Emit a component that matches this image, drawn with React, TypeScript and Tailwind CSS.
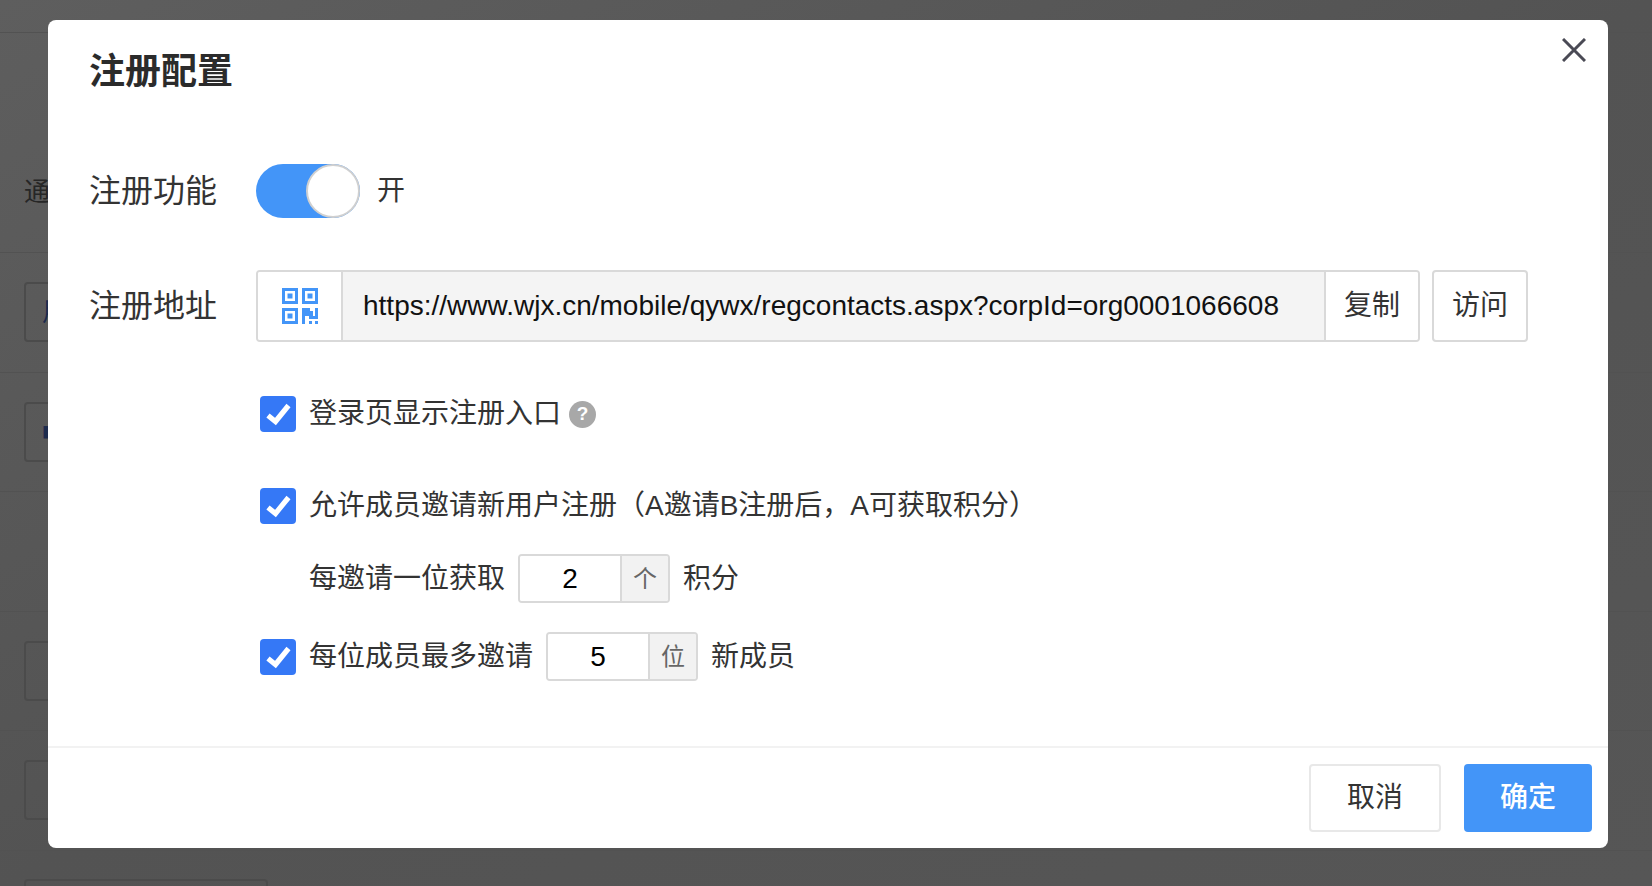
const font = { fontFamily: '"Liberation Sans", "Noto Sans CJK SC", sans-serif' };

const Checkbox = () => (
    <div className="flex h-9 w-9 shrink-0 items-center justify-center rounded bg-[#3578f6]">
        <svg width="36" height="36" viewBox="0 0 36 36" fill="none">
            <path d="M8 19.5 L15.5 25.5 L28.5 9.5" stroke="#fff" strokeWidth="5.2" />
        </svg>
    </div>
);

const QrIcon = () => (
    <svg width="36" height="36" viewBox="0 0 36 36" fill="#4395f8">
        <path fillRule="evenodd" d="M0 0h16v16H0zM3 3v10h10V3z" />
        <rect x="5.5" y="5.5" width="5" height="5" />
        <path fillRule="evenodd" d="M20 0h16v16H20zM23 3v10h10V3z" />
        <rect x="25.5" y="5.5" width="5" height="5" />
        <path fillRule="evenodd" d="M0 20h16v16H0zM3 23v10h10V23z" />
        <rect x="5.5" y="25.5" width="5" height="5" />
        <path d="M20 20h8v3h3v5h2v-8h3v11h-9v-3h-4v10h-3z" />
        <rect x="27" y="33" width="3" height="3" />
        <rect x="33" y="33" width="3" height="3" />
    </svg>
);

const UnitInput = ({ value, unit }: { value: string; unit: string }) => (
    <div className="flex h-[49px] w-[152px] shrink-0 overflow-hidden rounded border-2 border-[#d9d9d9]">
        <div className="flex w-[100px] items-center justify-center bg-white text-[28px] text-black">{value}</div>
        <div className="flex flex-1 items-center justify-center border-l-2 border-[#d9d9d9] bg-[#f2f2f2] text-[24px] text-[#666]">{unit}</div>
    </div>
);

const BgRow = ({ box, mark }: { box?: boolean; mark?: string }) => (
    <div className="flex h-[119.5px] items-center border-b border-[#525252] pl-6">
        {box && (
            <div className="flex h-[60px] w-[240px] items-center rounded border-2 border-[#4b4b4b] pl-4 text-[26px] text-[#1d2b4d]">{mark}</div>
        )}
    </div>
);

export default function App() {
    return (
        <div className="relative h-[886px] w-[1652px] overflow-hidden bg-gradient-to-br from-[#5e5e5e] via-[#535353] to-[#565656]" style={font}>
            {/* page behind the dialog */}
            <div className="h-[33px] border-b border-[#525252]" />
            <div className="flex h-[220px] items-end border-b border-[#525252] pb-[40px] pl-6 text-[26px] text-[#262626]">通用设置</div>
            <BgRow box mark="用户" />
            <BgRow box mark="■" />
            <BgRow />
            <BgRow box />
            <BgRow box />
            <div className="mt-7 ml-6 h-[60px] w-[244px] rounded border-2 border-[#4b4b4b]" />

            {/* dialog */}
            <div className="absolute top-5 left-12 flex h-[828px] w-[1560px] flex-col rounded-lg bg-white text-[#333]">
                <button className="absolute top-[18px] right-[22px] text-[#4a4a55]">
                    <svg width="24" height="24" viewBox="0 0 24 24" fill="none" stroke="currentColor" strokeWidth="3">
                        <path d="M1 1 L23 23 M23 1 L1 23" />
                    </svg>
                </button>

                <div className="pt-[30px] pl-[41px]">
                    <h2 className="h-11 text-[36px] leading-[44px] font-bold text-[#2b2b2b]">注册配置</h2>

                    {/* switch */}
                    <div className="mt-[70px] flex h-[54px] items-center">
                        <div className="w-[167px] text-[32px]">注册功能</div>
                        <div className="flex h-[54px] w-[104px] justify-end rounded-full bg-[#4395f8]">
                            <div className="h-[54px] w-[54px] rounded-full border-2 border-[#d0d0d0] bg-white" />
                        </div>
                        <span className="ml-[17px] text-[28px]">开</span>
                    </div>

                    {/* url */}
                    <div className="mt-[52px] flex h-[72px] items-center">
                        <div className="w-[167px] text-[32px]">注册地址</div>
                        <div className="flex h-[72px] w-[1164px] overflow-hidden rounded border-2 border-[#d9d9d9]">
                            <div className="flex w-[85px] shrink-0 items-center justify-center border-r-2 border-[#d9d9d9] bg-white">
                                <QrIcon />
                            </div>
                            <div className="flex flex-1 items-center bg-[#f4f4f4] pr-5 pl-5">
                                <input
                                    readOnly
                                    className="w-full bg-transparent text-[28px] text-[#111] outline-none"
                                    value="https://www.wjx.cn/mobile/qywx/regcontacts.aspx?corpId=org0001066608"
                                />
                            </div>
                            <div className="flex w-[94px] shrink-0 items-center justify-center border-l-2 border-[#d9d9d9] bg-white text-[28px]">复制</div>
                        </div>
                        <div className="ml-3 flex h-[72px] w-[96px] items-center justify-center rounded border-2 border-[#d9d9d9] text-[28px]">访问</div>
                    </div>

                    {/* options */}
                    <div className="mt-[54px] ml-[171px] flex h-9 items-center gap-[13px] text-[28px]">
                        <Checkbox />
                        <span>登录页显示注册入口</span>
                        <span className="-ml-[5px] flex h-[27px] w-[27px] items-center justify-center rounded-full bg-[#a8a8a8] text-[19px] font-bold text-white">?</span>
                    </div>
                    <div className="mt-[56px] ml-[171px] flex h-9 items-center gap-[13px] text-[28px]">
                        <Checkbox />
                        <span>允许成员邀请新用户注册（A邀请B注册后，A可获取积分）</span>
                    </div>
                    <div className="mt-[30px] ml-[220px] flex h-[49px] items-center gap-[13px] text-[28px]">
                        <span>每邀请一位获取</span>
                        <UnitInput value="2" unit="个" />
                        <span>积分</span>
                    </div>
                    <div className="mt-[29px] ml-[171px] flex h-[49px] items-center gap-[13px] text-[28px]">
                        <Checkbox />
                        <span>每位成员最多邀请</span>
                        <UnitInput value="5" unit="位" />
                        <span>新成员</span>
                    </div>
                </div>

                {/* footer */}
                <div className="mt-auto flex h-[102px] justify-end gap-[23px] border-t-2 border-[#f2f2f2] pt-4 pr-4">
                    <button className="h-[68px] w-[132px] rounded border-2 border-[#e8e8e8] bg-white text-[28px] text-[#333]">取消</button>
                    <button className="h-[68px] w-[128px] rounded bg-[#4395f8] text-[28px] font-medium text-white">确定</button>
                </div>
            </div>
        </div>
    );
}
